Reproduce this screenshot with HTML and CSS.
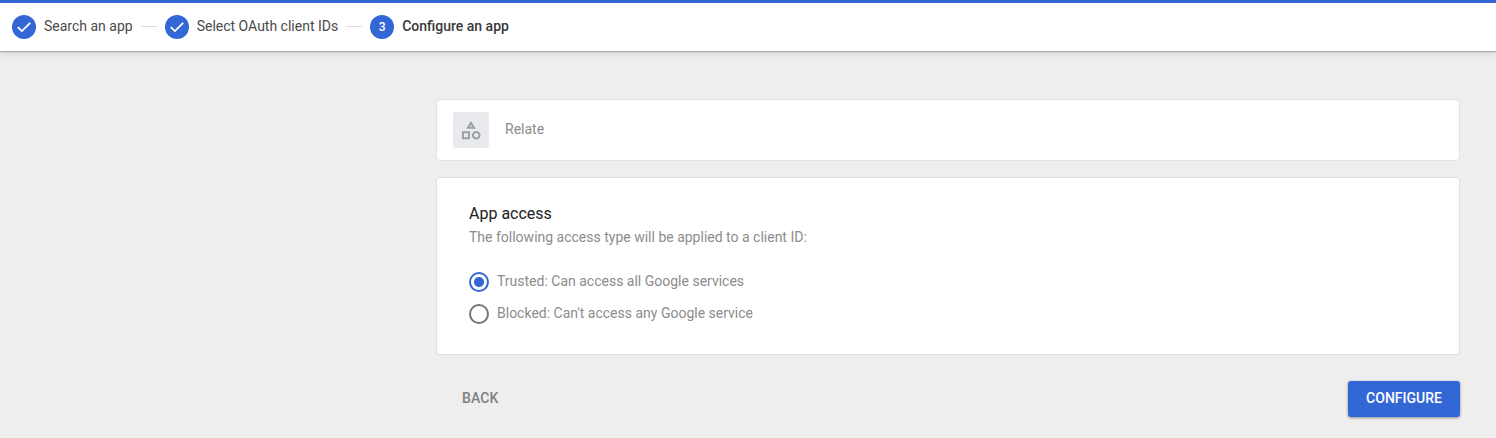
FILE: index.html
```html
<!DOCTYPE html>
<html lang="en">
<head>
<meta charset="utf-8">
<title>Configure an app</title>
<link rel="stylesheet" href="styles.css">
</head>
<body>
<header class="stepper">
  <div class="step"><span class="badge"><svg width="24" height="24" viewBox="0 0 24 24"><path d="M5.8 12.2l4.1 3.9 8.3-8.2" fill="none" stroke="#fff" stroke-width="1.8"/></svg></span><span class="label">Search an app</span></div>
  <span class="line"></span>
  <div class="step"><span class="badge"><svg width="24" height="24" viewBox="0 0 24 24"><path d="M5.8 12.2l4.1 3.9 8.3-8.2" fill="none" stroke="#fff" stroke-width="1.8"/></svg></span><span class="label">Select OAuth client IDs</span></div>
  <span class="line"></span>
  <div class="step current"><span class="badge">3</span><span class="label">Configure an app</span></div>
</header>
<main class="content">
  <section class="card app">
    <span class="app-icon"><svg width="24" height="24" viewBox="0 0 24 24" fill="none" stroke="#9aa0a6" stroke-width="2"><path d="M12 4.9L15 9.8H9z"/><path d="M4 14.3h6v6H4z"/><circle cx="17.2" cy="17.2" r="3.3"/></svg></span>
    <span class="app-name">Relate</span>
  </section>
  <section class="card access">
    <h1 class="title">App access</h1>
    <p class="hint">The following access type will be applied to a client ID:</p>
    <div class="option"><span class="radio checked"></span><span class="option-label">Trusted: Can access all Google services</span></div>
    <div class="option"><span class="radio"></span><span class="option-label">Blocked: Can't access any Google service</span></div>
  </section>
  <footer class="actions">
    <button class="back">BACK</button>
    <button class="configure">CONFIGURE</button>
  </footer>
</main>
</body>
</html>
```
FILE: styles.css
```css
* { box-sizing: border-box; }
body { margin: 0; min-height: 438px; background: #eee; font-family: Roboto, sans-serif; font-size: 14px; line-height: 20px; color: #8c8c8c; overflow: hidden; }
.stepper { display: flex; align-items: center; height: 51px; padding: 0 12px 1px; border-top: 3px solid #3367d6; background: #fff; box-shadow: 0 1px 1px rgba(0,0,0,.2), 0 2px 6px rgba(0,0,0,.15); }
.step { display: flex; align-items: center; gap: 8px; color: #4a4a4a; }
.label, .app-name, .option-label { padding-bottom: 2px; }
.badge { display: flex; align-items: center; justify-content: center; width: 24px; height: 24px; border-radius: 50%; background: #3367d6; color: #fff; font-size: 12px; font-weight: 500; }
.line { width: 16px; height: 1px; margin: 0 8px; background: #dadce0; }
.current .label { font-weight: 500; color: #383838; }
.content { padding: 48px 36px 0 436px; }
.card { background: #fff; border: 1px solid #e0e0e0; border-radius: 4px; }
.app { display: flex; align-items: center; gap: 16px; height: 62px; padding: 0 16px; }
.app-icon { display: flex; align-items: center; justify-content: center; width: 36px; height: 36px; border-radius: 3px; background: #e8eaed; }
.access { height: 178px; margin-top: 16px; padding: 24px 32px; }
.title { margin: 0; font-size: 16px; line-height: 24px; font-weight: 400; color: #212121; }
.hint { margin: 0 0 18px; line-height: 22px; }
.option { display: flex; align-items: center; gap: 8px; height: 32px; }
.radio { width: 20px; height: 20px; border: 2px solid #757575; border-radius: 50%; }
.radio.checked { border-color: #3367d6; background: radial-gradient(circle, #3367d6 4.5px, transparent 5.5px); }
.actions { display: flex; justify-content: space-between; margin-top: 26px; padding-left: 10px; }
button { height: 36px; padding: 0 16px 2px; border: 0; border-radius: 3px; font: 500 14px/34px Roboto, sans-serif; }
.back { background: none; color: #808080; letter-spacing: .1px; }
.configure { width: 112px; background: #3367d6; color: #fff; box-shadow: 0 1px 3px rgba(0,0,0,.4); }
```
